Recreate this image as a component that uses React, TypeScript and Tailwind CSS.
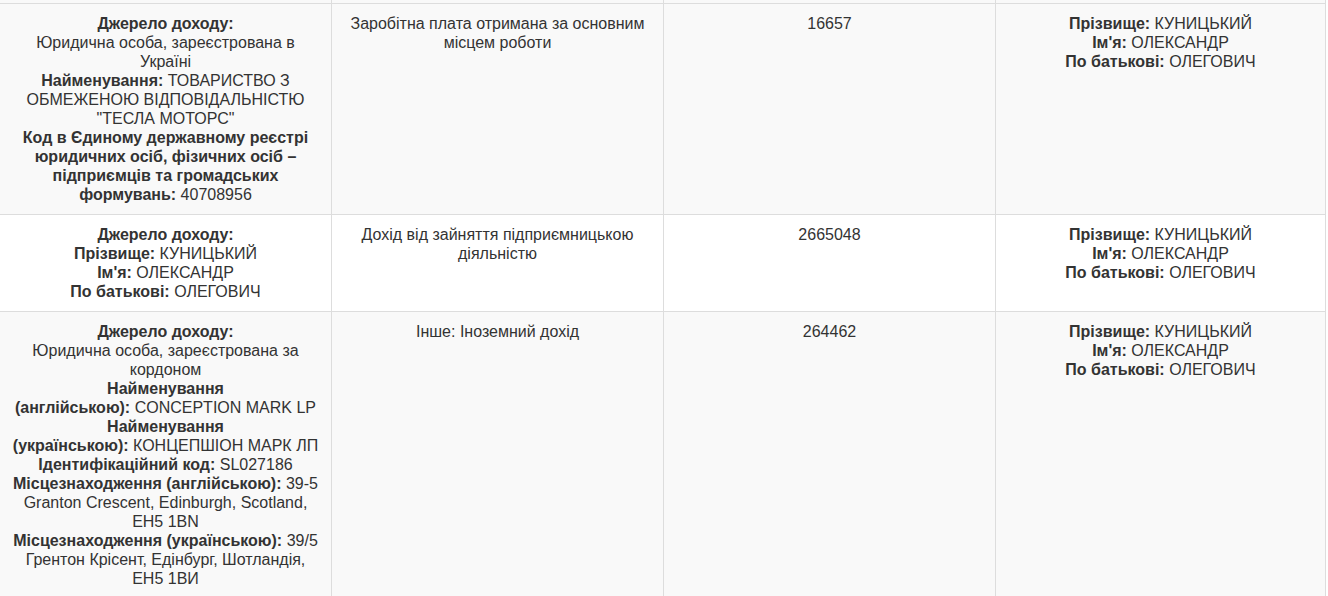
import React from "react";

const B = ({ children }: { children: React.ReactNode }) => (
  <span className="font-bold">{children}</span>
);

const Person = () => (
  <>
    <B>Прізвище:</B> КУНИЦЬКИЙ
    <br />
    <B>Ім'я:</B> ОЛЕКСАНДР
    <br />
    <B>По батькові:</B> ОЛЕГОВИЧ
  </>
);

const Cell = ({ children }: { children?: React.ReactNode }) => (
  <div className="whitespace-nowrap border-r border-[#dddddd] px-2 py-[10px] text-center">{children}</div>
);

const Row = ({ bg, cells }: { bg: string; cells: React.ReactNode[] }) => (
  <div className={`grid grid-cols-[332px_332px_332px_330px] border-t border-[#dddddd] ${bg}`}>
    {cells.map((c, i) => (
      <Cell key={i}>{c}</Cell>
    ))}
  </div>
);

export default function App() {
  return (
    <div
      className="h-[596px] w-[1328px] overflow-hidden bg-white text-[16px] leading-[19px] text-[#333333]"
      style={{ fontFamily: '"Liberation Sans", Arial, sans-serif' }}
    >
      <div className="w-[1326px]">
        <div className="grid h-[3px] grid-cols-[332px_332px_332px_330px] bg-[#f9f9f9]">
          <div className="border-r border-[#dddddd]" />
          <div className="border-r border-[#dddddd]" />
          <div className="border-r border-[#dddddd]" />
          <div className="border-r border-[#dddddd]" />
        </div>
        <Row
          bg="bg-[#f9f9f9]"
          cells={[
            <>
              <B>Джерело доходу:</B>
              <br />
              Юридична особа, зареєстрована в
              <br />
              Україні
              <br />
              <B>Найменування:</B> ТОВАРИСТВО З
              <br />
              ОБМЕЖЕНОЮ ВІДПОВІДАЛЬНІСТЮ
              <br />
              "ТЕСЛА МОТОРС"
              <br />
              <B>Код в Єдиному державному реєстрі</B>
              <br />
              <B>юридичних осіб, фізичних осіб –</B>
              <br />
              <B>підприємців та громадських</B>
              <br />
              <B>формувань:</B> 40708956
            </>,
            <>
              Заробітна плата отримана за основним
              <br />
              місцем роботи
            </>,
            <>16657</>,
            <Person />,
          ]}
        />
        <Row
          bg="bg-white"
          cells={[
            <>
              <B>Джерело доходу:</B>
              <br />
              <Person />
            </>,
            <>
              Дохід від зайняття підприємницькою
              <br />
              діяльністю
            </>,
            <>2665048</>,
            <Person />,
          ]}
        />
        <Row
          bg="bg-[#f9f9f9]"
          cells={[
            <>
              <B>Джерело доходу:</B>
              <br />
              Юридична особа, зареєстрована за
              <br />
              кордоном
              <br />
              <B>Найменування</B>
              <br />
              <B>(англійською):</B> CONCEPTION MARK LP
              <br />
              <B>Найменування</B>
              <br />
              <B>(українською):</B> КОНЦЕПШІОН МАРК ЛП
              <br />
              <B>Ідентифікаційний код:</B> SL027186
              <br />
              <B>Місцезнаходження (англійською):</B> 39-5
              <br />
              Granton Crescent, Edinburgh, Scotland,
              <br />
              EH5 1BN
              <br />
              <B>Місцезнаходження (українською):</B> 39/5
              <br />
              Грентон Крісент, Едінбург, Шотландія,
              <br />
              ЕН5 1ВИ
              <br />
              <br />
            </>,
            <>Інше: Іноземний дохід</>,
            <>264462</>,
            <Person />,
          ]}
        />
      </div>
    </div>
  );
}
